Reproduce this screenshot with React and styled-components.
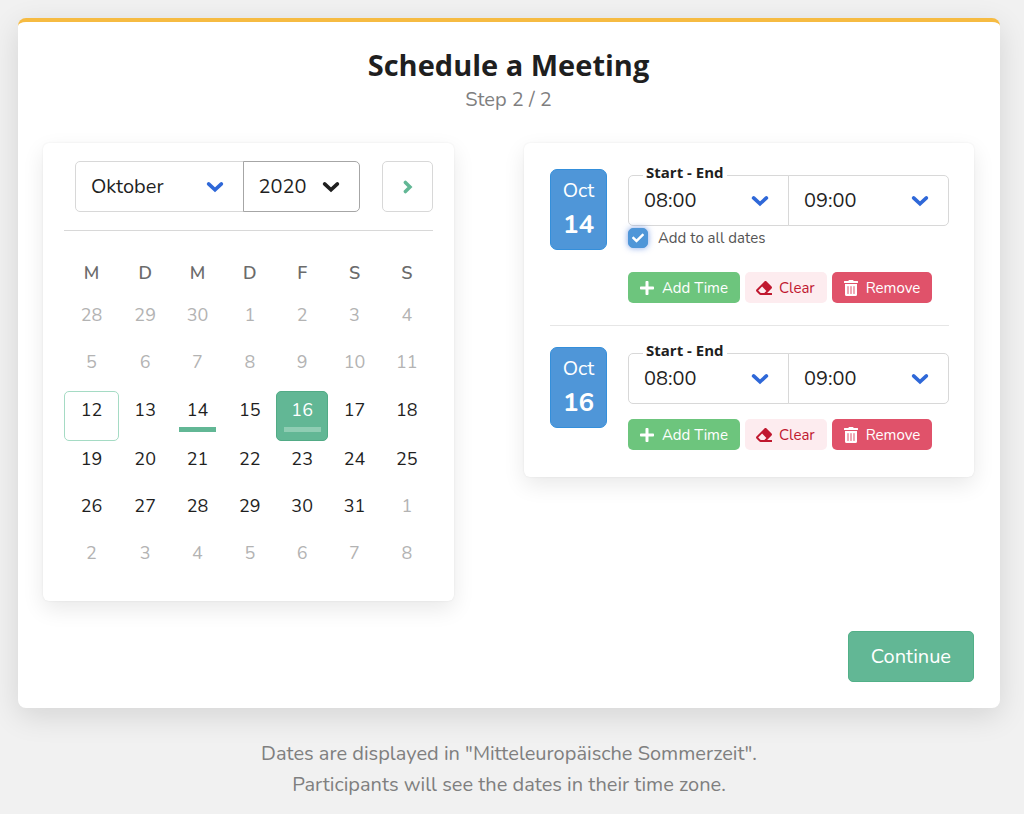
import React, { useState } from 'react'
import styled, { createGlobalStyle, css } from 'styled-components'
import { FaCheck, FaEraser, FaPlus, FaTrashAlt } from 'react-icons/fa'

const colors = {
    bg: '#f1f1f1',
    card: '#ffffff',
    accent: '#f6bb42',
    primary: '#62b795',
    primaryLight: '#a5dbc4',
    blue: '#4f96d8',
    arrow: '#2f68d8',
    success: '#6dc57d',
    danger: '#e0526a',
    dangerBg: '#fdecef',
    dangerText: '#c0182f',
    border: '#d8d8d8',
    text: '#1f1f1f',
    grey: '#7f7f7f',
    muted: '#b3b3b3',
};
const fonts = {
    body: `Nunito, Lato, sans-serif`,
    heading: `'Open Sans', sans-serif`,
};

const GlobalStyle = createGlobalStyle`
    * {
        box-sizing: border-box;
    }
    body {
        margin: 0;
        background-color: ${colors.bg};
        color: ${colors.text};
        font-family: ${fonts.body};
        font-size: 20px;
    }
    button, select, input {
        font-family: inherit;
    }
`;
const Page = styled.div`
    padding: 18px 24px 14px 18px;
`;
const Card = styled.main`
    padding: 24px 26px 26px 25px;
    border-top: 4px solid ${colors.accent};
    border-radius: 8px;
    background-color: ${colors.card};
    box-shadow: 0 8px 30px rgba(0, 0, 0, .12);
`;
const Header = styled.header`
    margin-bottom: 28px;
    text-align: center;
`;
const Title = styled.h1`
    margin: 0;
    font-family: ${fonts.heading};
    font-size: 29px;
    font-weight: 700;
    line-height: 38px;
`;
const Step = styled.p`
    margin: 0;
    color: ${colors.grey};
    line-height: 31px;
`;
const Columns = styled.div`
    display: grid;
    grid-template-columns: 411fr 450fr;
    align-items: start;
    gap: 70px;
`;
const Panel = styled.section`
    border-radius: 6px;
    background-color: ${colors.card};
    box-shadow: 0 8px 22px rgba(0, 0, 0, .09), 0 0 2px rgba(0, 0, 0, .08);
`;
const CalendarPanel = styled(Panel)`
    padding: 18px 21px 19px;
`;
const CalendarNav = styled.div`
    display: flex;
    gap: 22px;
    padding: 0 0 18px 11px;
    border-bottom: 1px solid ${colors.border};
`;
const SelectGroup = styled.div`
    display: flex;
    flex: 1;
`;
const Select = styled.select`
    display: block;
    width: 100%;
    height: 51px;
    padding: 0 15px;
    border: 1px solid ${({ $dark }) => ($dark ? '#a6a6a6' : colors.border)};
    border-radius: 5px 0 0 5px;
    background-color: transparent;
    color: ${colors.text};
    font-size: 20px;
    appearance: none;
`;
const SelectWrap = styled.div`
    position: relative;
    flex: ${({ $grow }) => $grow || 1} 1 0;
    svg {
        position: absolute;
        top: 50%;
        right: 20px;
        margin-top: -6px;
        color: ${({ $dark }) => ($dark ? colors.text : colors.arrow)};
        pointer-events: none;
    }
    &:last-child {
        margin-left: -1px;
    }
    &:last-child ${Select} {
        border-radius: 0 5px 5px 0;
    }
`;
const NextButton = styled.button`
    display: flex;
    align-items: center;
    justify-content: center;
    width: 51px;
    height: 51px;
    border: 1px solid ${colors.border};
    border-radius: 5px;
    background-color: ${colors.card};
    color: ${colors.primary};
    cursor: pointer;
`;
const Table = styled.table`
    width: 100%;
    margin-top: 18px;
    table-layout: fixed;
    border-collapse: collapse;
    th, td {
        padding: 0;
    }
    th {
        height: 48px;
        color: #6b6b6b;
        font-size: 18px;
        font-weight: 600;
    }
    th:first-child {
        width: 55px;
    }
`;
const Day = styled.button`
    display: flex;
    flex-direction: column;
    align-items: center;
    width: 100%;
    height: 47px;
    padding: 1px 0 0;
    border: 0 solid transparent;
    border-radius: 5px;
    background-color: transparent;
    color: ${({ $muted }) => ($muted ? colors.muted : colors.text)};
    font-size: 18px;
    line-height: 34px;
    cursor: pointer;
    ${({ $today }) => $today && css`
        height: 50px;
        border: 1px solid ${colors.primaryLight};
    `}
    ${({ $active }) => $active && css`
        height: 50px;
        border: 1px solid #52ab86;
        background-color: ${colors.primary};
        color: #ffffff;
    `}
`;
const DayCell = styled.td`
    vertical-align: top;
    ${({ $spaced }) => $spaced && css`
        padding-top: 1px !important;
    `}
`;
const Bar = styled.span`
    width: 37px;
    height: 5px;
    background-color: ${({ $light }) => ($light ? '#8fcdb3' : colors.primary)};
`;
const TimesPanel = styled(Panel)`
    padding: 26px 25px 27px 26px;
`;
const Slot = styled.article`
    display: flex;
    gap: 21px;
    & + & {
        margin-top: 22px;
        padding-top: 21px;
        border-top: 1px solid #e6e6e6;
    }
`;
const DateBadge = styled.div`
    width: 57px;
    height: 81px;
    padding-top: 4px;
    border: 1px solid #348fdb;
    border-radius: 7px;
    background-color: ${colors.blue};
    color: #ffffff;
    text-align: center;
    line-height: 34px;
    strong {
        display: block;
        font-size: 26px;
        font-weight: 700;
    }
`;
const SlotBody = styled.div`
    flex: 1;
    padding-top: 6px;
`;
const TimeRange = styled.fieldset`
    position: relative;
    display: flex;
    min-width: 0;
    margin: 0;
    padding: 0;
    border: 0;
`;
const Legend = styled.legend`
    position: absolute;
    z-index: 1;
    top: -13px;
    left: 15px;
    padding: 0 3px;
    background-color: ${colors.card};
    font-family: ${fonts.heading};
    font-size: 15px;
    font-weight: 700;
    line-height: 20px;
`;
const CheckLabel = styled.label`
    position: relative;
    display: flex;
    align-items: center;
    gap: 10px;
    margin-top: 2px;
    color: #555555;
    font-size: 15px;
    line-height: 20px;
    svg {
        position: absolute;
        left: 4px;
        width: 12px;
        height: 12px;
        color: #ffffff;
        pointer-events: none;
    }
`;
const Checkbox = styled.input`
    width: 20px;
    height: 20px;
    margin: 0;
    border: 1px solid ${colors.blue};
    border-radius: 5px;
    background-color: ${colors.card};
    appearance: none;
    &:checked {
        background-color: ${colors.blue};
        box-shadow: 0 0 6px rgba(47, 104, 216, .6);
    }
`;
const Actions = styled.div`
    display: flex;
    gap: 5px;
    margin-top: ${({ $spaced }) => ($spaced ? '24px' : '15px')};
`;
const variants = {
    add: { bg: colors.success, color: '#ffffff' },
    clear: { bg: colors.dangerBg, color: colors.dangerText },
    remove: { bg: colors.danger, color: '#ffffff' },
};
const ActionButton = styled.button`
    display: flex;
    align-items: center;
    gap: 7px;
    height: 31px;
    padding: 0 12px 0 11px;
    border: 0;
    border-radius: 5px;
    background-color: ${({ $variant }) => variants[$variant].bg};
    color: ${({ $variant }) => variants[$variant].color};
    font-size: 15px;
    white-space: nowrap;
    cursor: pointer;
    svg {
        width: auto;
        height: 16px;
    }
`;
const Footer = styled.div`
    display: flex;
    justify-content: flex-end;
    margin-top: 30px;
`;
const ContinueButton = styled.button`
    height: 51px;
    padding: 0 22px;
    border: 1px solid #52b088;
    border-radius: 5px;
    background-color: ${colors.primary};
    color: #ffffff;
    font-size: 20px;
    cursor: pointer;
`;
const Note = styled.p`
    margin: 30px 0 0;
    color: ${colors.grey};
    text-align: center;
    line-height: 31px;
`;

const weekdays = ['M', 'D', 'M', 'D', 'F', 'S', 'S'];
const weeks = [
    [28, 29, 30, 1, 2, 3, 4],
    [5, 6, 7, 8, 9, 10, 11],
    [12, 13, 14, 15, 16, 17, 18],
    [19, 20, 21, 22, 23, 24, 25],
    [26, 27, 28, 29, 30, 31, 1],
    [2, 3, 4, 5, 6, 7, 8],
];
const today = 12;
const months = ['Januar', 'Februar', 'März', 'April', 'Mai', 'Juni', 'Juli', 'August', 'September', 'Oktober', 'November', 'Dezember'];
const years = ['2020', '2021', '2022'];
const hours = Array.from({ length: 24 }, (_, i) => `${String(i).padStart(2, '0')}:00`);

// days before today and days of the next month are greyed out
const isMuted = (week, day) => week < 2 || week === 5 || (week === 4 && day < 7);

const ArrowDown = () => (
    <svg width="18" height="12" viewBox="0 0 18 12" fill="none" stroke="currentColor" strokeWidth="3.6" strokeLinecap="round" aria-hidden="true">
        <path d="M2.6 2.9 9 8.9l6.4-6" />
    </svg>
);
const ArrowRight = () => (
    <svg width="10" height="14" viewBox="0 0 10 14" fill="none" stroke="currentColor" strokeWidth="3.5" strokeLinecap="round" aria-hidden="true">
        <path d="M2.4 2.4 7 7l-4.6 4.6" />
    </svg>
);

function Dropdown({ label, options, initial, grow, dark }) {
    const [value, setValue] = useState(initial);
    return (
        <SelectWrap $grow={grow} $dark={dark}>
            <Select aria-label={label} value={value} $dark={dark} onChange={e => setValue(e.target.value)}>
                {options.map(item => <option key={item}>{item}</option>)}
            </Select>
            <ArrowDown />
        </SelectWrap>
    )
}

function Calendar({ marked, active, onSelect }) {
    return (
        <CalendarPanel>
            <CalendarNav>
                <SelectGroup>
                    <Dropdown label="Month" options={months} initial="Oktober" grow={168} />
                    <Dropdown label="Year" options={years} initial="2020" grow={117} dark />
                </SelectGroup>
                <NextButton type="button" aria-label="Next month"><ArrowRight /></NextButton>
            </CalendarNav>
            <Table>
                <thead>
                    <tr>{weekdays.map((name, i) => <th key={i} scope="col">{name}</th>)}</tr>
                </thead>
                <tbody>
                    {weeks.map((days, week) => (
                        <tr key={week}>
                            {days.map(day => {
                                const muted = isMuted(week, day);
                                const isActive = !muted && day === active;
                                return (
                                    <DayCell key={day} $spaced={week === 2 && day !== today && !isActive}>
                                        <Day
                                            type="button"
                                            $muted={muted}
                                            $today={!muted && day === today}
                                            $active={isActive}
                                            onClick={() => !muted && onSelect(day)}
                                        >
                                            {day}
                                            {!muted && marked.includes(day) && <Bar $light={isActive} />}
                                        </Day>
                                    </DayCell>
                                )
                            })}
                        </tr>
                    ))}
                </tbody>
            </Table>
        </CalendarPanel>
    )
}

function TimeSlot({ day, first }) {
    const [all, setAll] = useState(true);
    return (
        <Slot>
            <DateBadge>Oct<strong>{day}</strong></DateBadge>
            <SlotBody>
                <TimeRange>
                    <Legend>Start - End</Legend>
                    <Dropdown label="Start" options={hours} initial="08:00" />
                    <Dropdown label="End" options={hours} initial="09:00" />
                </TimeRange>
                {first && (
                    <CheckLabel>
                        <Checkbox type="checkbox" checked={all} onChange={e => setAll(e.target.checked)} />
                        {all && <FaCheck />}
                        Add to all dates
                    </CheckLabel>
                )}
                <Actions $spaced={first}>
                    <ActionButton type="button" $variant="add"><FaPlus />Add Time</ActionButton>
                    <ActionButton type="button" $variant="clear"><FaEraser />Clear</ActionButton>
                    <ActionButton type="button" $variant="remove"><FaTrashAlt />Remove</ActionButton>
                </Actions>
            </SlotBody>
        </Slot>
    )
}

export default function App() {
    const [active, setActive] = useState(16);
    const marked = [14, 16];
    return (
        <Page>
            <GlobalStyle />
            <Card>
                <Header>
                    <Title>Schedule a Meeting</Title>
                    <Step>Step 2 / 2</Step>
                </Header>
                <Columns>
                    <Calendar marked={marked} active={active} onSelect={setActive} />
                    <TimesPanel>
                        {marked.map((day, i) => <TimeSlot key={day} day={day} first={i === 0} />)}
                    </TimesPanel>
                </Columns>
                <Footer>
                    <ContinueButton type="button">Continue</ContinueButton>
                </Footer>
            </Card>
            <Note>
                Dates are displayed in "Mitteleuropäische Sommerzeit".<br />
                Participants will see the dates in their time zone.
            </Note>
        </Page>
    )
}
